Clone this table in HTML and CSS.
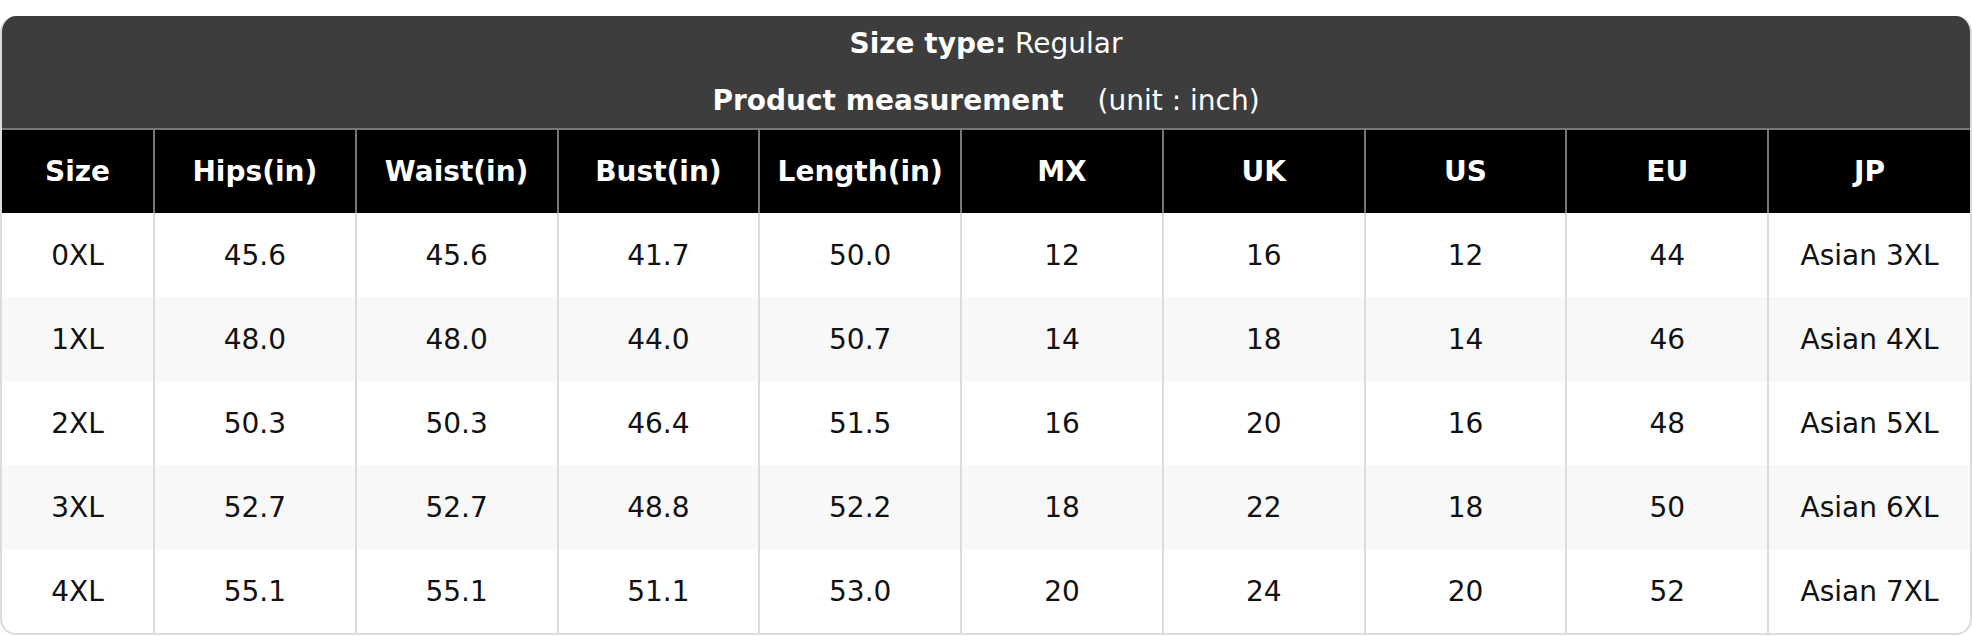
FILE: index.html
```html
<!DOCTYPE html>
<html>
<head>
<meta charset="utf-8">
<link rel="stylesheet" href="styles.css">
</head>
<body>
<div class="chart">
  <div class="title">
    <div class="title-line"><b>Size type:</b> Regular</div>
    <div class="title-line second"><b>Product measurement</b> <span class="unit">(unit : inch)</span></div>
  </div>
  <table class="sizes">
    <colgroup>
      <col class="col-size">
      <col><col><col><col><col><col><col><col><col>
    </colgroup>
    <thead>
      <tr>
        <th>Size</th><th>Hips(in)</th><th>Waist(in)</th><th>Bust(in)</th><th>Length(in)</th><th>MX</th><th>UK</th><th>US</th><th>EU</th><th>JP</th>
      </tr>
    </thead>
    <tbody>
      <tr><td>0XL</td><td>45.6</td><td>45.6</td><td>41.7</td><td>50.0</td><td>12</td><td>16</td><td>12</td><td>44</td><td>Asian 3XL</td></tr>
      <tr><td>1XL</td><td>48.0</td><td>48.0</td><td>44.0</td><td>50.7</td><td>14</td><td>18</td><td>14</td><td>46</td><td>Asian 4XL</td></tr>
      <tr><td>2XL</td><td>50.3</td><td>50.3</td><td>46.4</td><td>51.5</td><td>16</td><td>20</td><td>16</td><td>48</td><td>Asian 5XL</td></tr>
      <tr><td>3XL</td><td>52.7</td><td>52.7</td><td>48.8</td><td>52.2</td><td>18</td><td>22</td><td>18</td><td>50</td><td>Asian 6XL</td></tr>
      <tr><td>4XL</td><td>55.1</td><td>55.1</td><td>51.1</td><td>53.0</td><td>20</td><td>24</td><td>20</td><td>52</td><td>Asian 7XL</td></tr>
    </tbody>
  </table>
</div>
</body>
</html>
```
FILE: styles.css
```css
html, body {
  margin: 0;
  padding: 0;
  background: #ffffff;
}
body {
  padding-top: 16px;
  font-family: "DejaVu Sans", Verdana, sans-serif;
}
.chart {
  width: 1972px;
  box-sizing: border-box;
  border-radius: 16px;
  overflow: hidden;
  border: 2px solid #dcdcdc;
  border-top: none;
  background: #ffffff;
}
.title {
  background: #3d3d3d;
  color: #ffffff;
  text-align: center;
  font-size: 28px;
  margin: 0 -2px;
}
.title-line {
  height: 55px;
  line-height: 55px;
}
.title-line.second {
  height: 57px;
  line-height: 59px;
}
.title-line b {
  font-weight: bold;
}
.unit {
  margin-left: 25px;
}
.sizes {
  width: 100%;
  border-collapse: collapse;
  table-layout: fixed;
  font-size: 28px;
}
.col-size {
  width: 152px;
}
.sizes th {
  background: #000000;
  color: #ffffff;
  font-weight: bold;
  height: 83px;
  padding: 0;
  border-top: 2px solid #777777;
  border-left: 2px solid #777777;
  border-right: 2px solid #777777;
  text-align: center;
}
.sizes td {
  height: 84px;
  padding: 0;
  text-align: center;
  color: #111111;
  border-left: 2px solid #dcdcdc;
  border-right: 2px solid #dcdcdc;
}
.sizes th:first-child,
.sizes td:first-child {
  border-left: none;
}
.sizes th:last-child,
.sizes td:last-child {
  border-right: none;
}
.sizes tbody tr:nth-child(even) td {
  background: #f8f8f8;
}
```
